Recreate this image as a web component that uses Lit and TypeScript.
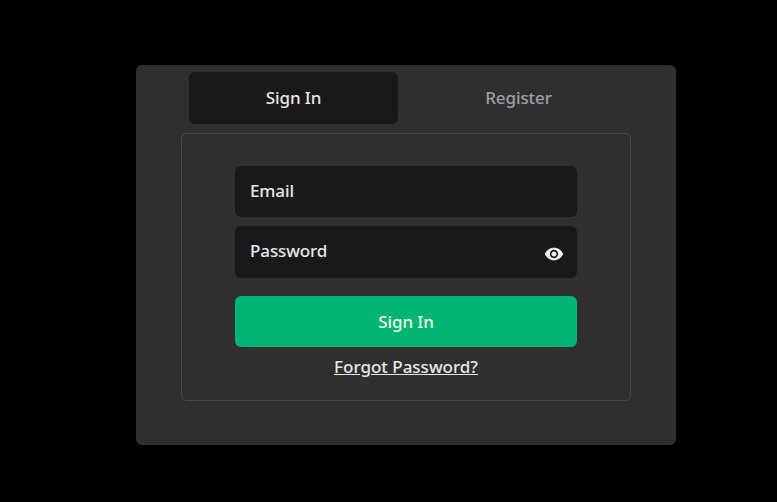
import { LitElement, html, css } from "lit";
import { customElement } from "lit/decorators.js";

@customElement("app-root")
export class AppRoot extends LitElement {
  static styles = css`
    :host {
      display: flex;
      justify-content: flex-start;
      box-sizing: border-box;
      width: 777px;
      height: 502px;
      padding: 65px 0 0 136px;
      background: #000;
      font-family: "Noto Sans", "Open Sans", sans-serif;
      font-size: 17px;
      font-weight: 500;
      overflow: hidden;
    }
    .card {
      box-sizing: border-box;
      width: 540px;
      height: 380px;
      padding: 7px 45px 0;
      border-radius: 6px;
      background: #2f2f31;
      display: flex;
      flex-direction: column;
      gap: 9px;
    }
    .tabs {
      display: flex;
      gap: 16px;
      padding: 0 8px;
    }
    .tab {
      box-sizing: border-box;
      flex: 1;
      height: 52px;
      padding-bottom: 2px;
      display: flex;
      align-items: center;
      justify-content: center;
      border-radius: 6px;
      color: #9b9ea3;
      letter-spacing: -0.1px;
    }
    .tab.active {
      background: #19191a;
      color: #e6e6e6;
    }
    .panel {
      box-sizing: border-box;
      height: 268px;
      padding: 32px 53px 0;
      border: 1px solid #47474a;
      border-radius: 6px;
      display: flex;
      flex-direction: column;
    }
    .field {
      box-sizing: border-box;
      height: 51px;
      padding: 0 15px 2px 15px;
      display: flex;
      align-items: center;
      justify-content: space-between;
      border-radius: 6px;
      background: #19191b;
      color: #e8e8e8;
      letter-spacing: -0.1px;
    }
    .field.password {
      height: 52px;
      margin-top: 9px;
      padding-bottom: 4px;
    }
    .eye {
      width: 20px;
      height: 20px;
      margin: 8px -2px 0 0;
      fill: #f2f2f2;
    }
    .submit {
      height: 51px;
      margin-top: 18px;
      display: flex;
      align-items: center;
      justify-content: center;
      border-radius: 6px;
      background: #00b574;
      color: #e8f5ef;
      letter-spacing: -0.1px;
    }
    .forgot {
      margin-top: 8px;
      text-align: center;
      color: #e8e8e8;
      text-decoration: underline;
    }
  `;

  render() {
    return html`
      <div class="card">
        <div class="tabs">
          <div class="tab active">Sign In</div>
          <div class="tab">Register</div>
        </div>
        <div class="panel">
          <div class="field">Email</div>
          <div class="field password">
            <span>Password</span>
            <svg class="eye" viewBox="0 0 24 24" aria-hidden="true">
              <path d="M12 4.5C7 4.5 2.73 7.61 1 12c1.73 4.39 6 7.5 11 7.5s9.27-3.11 11-7.5c-1.73-4.39-6-7.5-11-7.5zM12 17c-2.76 0-5-2.24-5-5s2.24-5 5-5 5 2.24 5 5-2.24 5-5 5zm0-8c-1.66 0-3 1.34-3 3s1.34 3 3 3 3-1.34 3-3-1.34-3-3-3z" />
            </svg>
          </div>
          <div class="submit">Sign In</div>
          <div class="forgot">Forgot Password?</div>
        </div>
      </div>
    `;
  }
}
